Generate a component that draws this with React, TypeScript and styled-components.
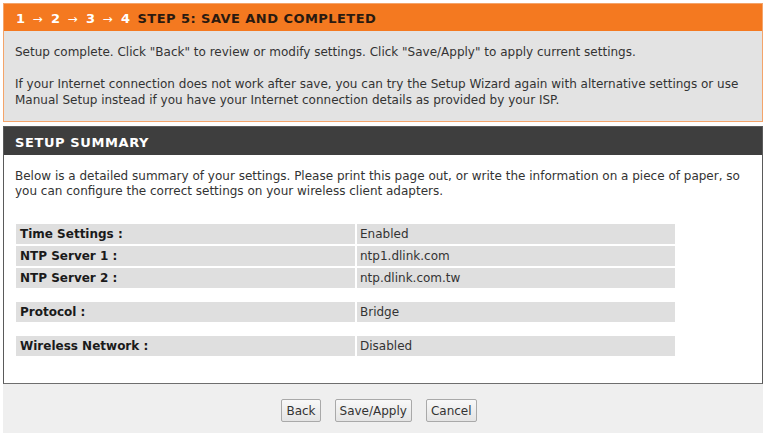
import React from 'react'
import styled, { createGlobalStyle } from 'styled-components'

const GlobalStyle = createGlobalStyle`
  body {
    margin: 0;
    background: #ffffff;
    font-family: Tahoma, "DejaVu Sans", "Noto Sans", sans-serif;
  }
`

const Page = styled.div`
  width: 768px;
  height: 433px;
  overflow: hidden;
  padding: 3px 5px 0 3px;
  box-sizing: border-box;
  display: flex;
  flex-direction: column;
  gap: 4px;
`

const StepBox = styled.section`
  border: 1px solid #f4a46a;
  background: #e3e3e3;
`

const StepHeader = styled.div`
  height: 27px;
  padding-top: 1px;
  box-sizing: border-box;
  background: #f47920;
  display: flex;
  align-items: center;
  padding-left: 12px;
  font-size: 13px;
  font-weight: bold;
  letter-spacing: 0.45px;
  color: #2a1a10;
`

const Steps = styled.span`
  color: #ffffff;
  margin-right: 7px;
`

const Arrow = styled.span`
  font-weight: normal;
  font-size: 12px;
  margin: 0 8px 0 7px;
`

const StepBody = styled.div`
  padding: 13px 11px 13px;
  font-size: 12px;
  line-height: 16px;
  color: #333333;

  p {
    margin: 0;
  }

  p + p {
    margin-top: 16px;
  }
`

const SummaryBox = styled.section`
  border: 1px solid #5a5a5a;
  border-bottom-color: #6e6e6e;
  background: #ffffff;
  height: 258px;
  box-sizing: border-box;
`

const SummaryHeader = styled.div`
  height: 28px;
  padding-top: 2px;
  box-sizing: border-box;
  background: #3e3e3e;
  display: flex;
  align-items: center;
  padding-left: 11px;
  font-size: 13px;
  font-weight: bold;
  letter-spacing: 0.6px;
  color: #ffffff;
`

const SummaryBody = styled.div`
  padding: 14px 11px 0;
  font-size: 12px;
  line-height: 15px;
  color: #333333;
`

const Intro = styled.p`
  margin: 0 0 25px;
`

const Group = styled.div`
  display: grid;
  grid-template-columns: 339px 318px;
  grid-auto-rows: 20px;
  gap: 2px;
  width: 659px;
  margin-left: 1px;
  margin-bottom: 14px;
`

const Label = styled.div`
  background: #dfdfdf;
  line-height: 20px;
  padding-left: 4px;
  font-weight: bold;
  color: #1a1a1a;
`

const Value = styled.div`
  background: #dfdfdf;
  line-height: 20px;
  padding-left: 3px;
  color: #333333;
`

const Footer = styled.div`
  margin-top: -4px;
  flex: 1;
  background: #efefef;
  display: flex;
  justify-content: center;
  align-items: flex-start;
  padding-top: 15px;
  padding-right: 8px;
  gap: 14px;
`

const Button = styled.button`
  height: 23px;
  padding: 0 4px;
  font-family: Tahoma, "DejaVu Sans", sans-serif;
  font-size: 12px;
  color: #333333;
  background: linear-gradient(#f8f8f8, #e4e4e4);
  border: 1px solid #a9a9a9;
  border-radius: 2px;
`

const groups = [
  [
    ['Time Settings :', 'Enabled'],
    ['NTP Server 1 :', 'ntp1.dlink.com'],
    ['NTP Server 2 :', 'ntp.dlink.com.tw'],
  ],
  [['Protocol :', 'Bridge']],
  [['Wireless Network :', 'Disabled']],
]

export default function App() {
  return (
    <>
      <GlobalStyle />
      <Page>
        <StepBox>
          <StepHeader>
            <Steps>
              1<Arrow>→</Arrow>2<Arrow>→</Arrow>3<Arrow>→</Arrow>4
            </Steps>
            STEP 5: SAVE AND COMPLETED
          </StepHeader>
          <StepBody>
            <p>
              Setup complete. Click "Back" to review or modify settings. Click "Save/Apply" to apply current settings.
            </p>
            <p>
              If your Internet connection does not work after save, you can try the Setup Wizard again with alternative
              settings or use Manual Setup instead if you have your Internet connection details as provided by your ISP.
            </p>
          </StepBody>
        </StepBox>

        <SummaryBox>
          <SummaryHeader>SETUP SUMMARY</SummaryHeader>
          <SummaryBody>
            <Intro>
              Below is a detailed summary of your settings. Please print this page out, or write the information on a
              piece of paper, so you can configure the correct settings on your wireless client adapters.
            </Intro>
            {groups.map((rows, i) => (
              <Group key={i}>
                {rows.map(([label, value]) => (
                  <React.Fragment key={label}>
                    <Label>{label}</Label>
                    <Value>{value}</Value>
                  </React.Fragment>
                ))}
              </Group>
            ))}
          </SummaryBody>
        </SummaryBox>

        <Footer>
          <Button>Back</Button>
          <Button>Save/Apply</Button>
          <Button>Cancel</Button>
        </Footer>
      </Page>
    </>
  )
}
